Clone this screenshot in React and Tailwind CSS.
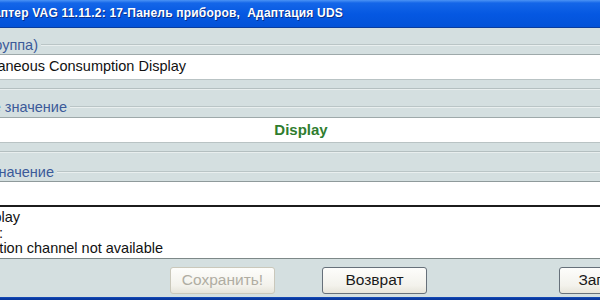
function Legend({ text, anchor }) {
  return (
    <div className="flex items-center h-[16px]">
      <div className={"flex justify-end shrink-0 " + anchor}>
        <span className="whitespace-nowrap text-[14.5px] leading-none text-[#3b5a99]">{text}</span>
      </div>
      <div className="flex-1 ml-[3px] h-[2px] border-t border-t-[#bac5c6] border-b border-b-[#e9efef]" />
    </div>
  );
}

function Field({ children, className }) {
  return (
    <div className={"bg-white border-t border-t-[#9ea9aa] border-b border-b-[#b9c3c4] " + className}>
      {children}
    </div>
  );
}

function Button({ label, disabled, className }) {
  return (
    <button
      className={
        "h-[27px] rounded-[3px] border flex items-center justify-center text-[15.5px] shrink-0 bg-[linear-gradient(#fdfdfb,#f3f2ec_70%,#e6e4da)] " +
        (disabled ? "border-[#cac8bb] text-[#b0ada2] " : "border-[#66707a] text-[#1a1a1a] ") +
        className
      }
    >
      {label}
    </button>
  );
}

export default function App() {
  return (
    <div className="w-[600px] h-[300px] overflow-hidden bg-[#d4dfe0] font-['Liberation_Sans',Arial,sans-serif] flex flex-col">
      {/* title bar */}
      <div className="h-[28px] shrink-0 flex items-center border-b border-b-[#0a3d9e] bg-[linear-gradient(#4b93f5_0px,#1466e8_3px,#0558e2_14px,#0352d8_27px)]">
        <div className="flex justify-end w-[343px] shrink-0 pb-[1px]">
          <span className="whitespace-nowrap text-white font-bold text-[12px] tracking-[0.2px] [text-shadow:1px_1px_0_#0a2f8a]">
            Адаптер VAG 11.11.2: 17-Панель приборов,&nbsp; Адаптация UDS
          </span>
        </div>
      </div>

      {/* channel */}
      <div className="h-[26px] shrink-0 flex flex-col justify-end pb-[1px]">
        <Legend text="Канал (группа)" anchor="w-[38px]" />
      </div>
      <Field className="h-[26px] flex items-center">
        <div className="flex justify-end w-[186px] shrink-0">
          <span className="whitespace-nowrap text-[14.5px] text-[#111]">Instantaneous Consumption Display</span>
        </div>
      </Field>

      {/* current value */}
      <div className="h-[8px] shrink-0" />
      <div className="h-[2px] shrink-0 border-t border-t-[#b4bfc0] border-b border-b-[#e8eeee]" />
      <div className="h-[27px] shrink-0 flex flex-col justify-end pb-[2px]">
        <Legend text="Текущее значение" anchor="w-[67px]" />
      </div>
      <Field className="h-[26px] flex items-center justify-center">
        <span className="text-[15px] font-bold text-[#2f7d2f] ml-[2px]">Display</span>
      </Field>

      {/* new value */}
      <div className="h-[8px] shrink-0" />
      <div className="h-[2px] shrink-0 border-t border-t-[#b4bfc0] border-b border-b-[#e8eeee]" />
      <div className="h-[28px] shrink-0 flex flex-col justify-end pb-[1px]">
        <Legend text="Новое значение" anchor="w-[54px]" />
      </div>
      <div className="h-[24px] shrink-0 bg-white border-t border-t-[#8f9a9b]" />

      {/* info box */}
      <div className="h-[54px] shrink-0 bg-white border-t-2 border-t-[#1c1c1c] border-b border-b-[#7d8888] pt-[3px] text-[14.5px] leading-[15.5px] text-[#111]">
        <div className="flex justify-end w-[20px]">
          <span className="whitespace-nowrap">1: Display</span>
        </div>
        <div className="flex justify-end w-[3px]">
          <span className="whitespace-nowrap">Status:</span>
        </div>
        <div className="flex justify-end w-[163px]">
          <span className="whitespace-nowrap">Adaptation channel not available</span>
        </div>
      </div>

      {/* buttons */}
      <div className="h-[38px] shrink-0 flex items-center pt-[4px]">
        <Button label="Сохранить!" disabled className="w-[105px] ml-[170px]" />
        <Button label="Возврат" className="w-[105px] ml-[47px]" />
        <Button label="Записать" className="w-[105px] ml-[132px]" />
      </div>
      <div className="flex-1 bg-[linear-gradient(#1d55c0,#0a3ca6_1px,#08379c)]" />
    </div>
  );
}
